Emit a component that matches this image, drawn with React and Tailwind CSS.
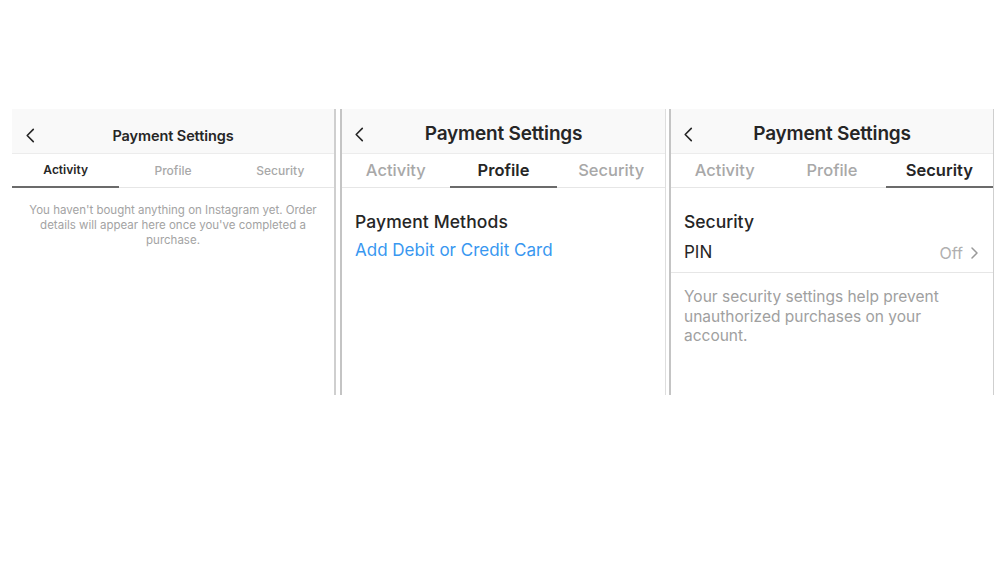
const font = { fontFamily: 'Inter, "Noto Sans", sans-serif' };

const Chevron = ({ className }) => (
  <svg className={className} viewBox="0 0 10 16" fill="none">
    <polyline points="8.5,1.5 2,8 8.5,14.5" stroke="#262626" strokeWidth="1.7" strokeLinecap="round" strokeLinejoin="round" />
  </svg>
);

const Header = ({ small }) => (
  <div className="relative h-[45px] bg-[#f9f9f9] border-b border-[#ececec] flex items-center justify-center">
    <Chevron
      className={
        small
          ? 'absolute left-[13px] top-[19px] w-[10px] h-[15px]'
          : 'absolute left-[12px] top-[18px] w-[10px] h-[15px]'
      }
    />
    <span
      className={
        small
          ? 'text-[14.5px] font-semibold text-[#262626] tracking-[-0.1px] translate-y-[5px]'
          : 'text-[19px] font-semibold text-[#262626] tracking-[-0.2px] translate-y-[3px]'
      }
    >
      Payment Settings
    </span>
  </div>
);

const Tabs = ({ active, small }) => (
  <div className="flex h-[34px] border-b border-[#e6e6e6]">
    {['Activity', 'Profile', 'Security'].map((t) => (
      <div
        key={t}
        className={
          'flex-1 flex items-center justify-center ' +
          (t === active ? 'border-b-2 border-[#6b6b6b] -mb-px ' : '') +
          (small ? 'text-[12px] ' : 'text-[16.5px] ') +
          (t === active ? 'text-[#262626] font-semibold' : 'text-[#a8a8a8] font-medium')
        }
      >
        {t}
      </div>
    ))}
  </div>
);

export default function App() {
  return (
    <div className="w-[999px] h-[562px] bg-white pt-[109px] pl-[12px]" style={font}>
      <div className="flex h-[286px]">
        <div className="w-[324px] border-r-2 border-[#cfcfcf]">
          <Header small />
          <Tabs active="Activity" small />
          <p className="px-[14px] pt-[15px] text-center text-[11.5px] leading-[15px] text-[#a3a3a3]">
            You haven't bought anything on Instagram yet. Order details will appear here once you've completed a purchase.
          </p>
        </div>
        <div className="w-[4px]" />
        <div className="w-[326px] border-l-2 border-r border-l-[#c4c4c4] border-r-[#dedede]">
          <Header />
          <Tabs active="Profile" />
          <div className="px-[13px] pt-[22px]">
            <div className="text-[17.5px] font-medium text-[#262626] leading-[24px] tracking-[0.1px]">Payment Methods</div>
            <div className="text-[17px] text-[#3897f0] leading-[24px] mt-[4px]">Add Debit or Credit Card</div>
          </div>
        </div>
        <div className="w-[3px]" />
        <div className="w-[325px] border-l-2 border-r border-l-[#c4c4c4] border-r-[#cfcfcf]">
          <Header />
          <Tabs active="Security" />
          <div className="px-[13px] pt-[22px] text-[17.5px] font-medium text-[#262626] leading-[24px]">Security</div>
          <div className="flex items-center justify-between pl-[13px] pr-[15px] h-[40px] border-b border-[#e6e6e6] -mt-[1px]">
            <span className="text-[17px] text-[#262626]">PIN</span>
            <span className="flex items-center gap-[8px] text-[16px] text-[#b0b0b0]">
              Off
              <svg width="7" height="12" viewBox="0 0 7 12" fill="none">
                <polyline points="1,1 6,6 1,11" stroke="#9a9a9a" strokeWidth="1.5" strokeLinecap="round" strokeLinejoin="round" />
              </svg>
            </span>
          </div>
          <p className="px-[13px] pt-[14px] text-[15.5px] leading-[19.5px] text-[#a0a0a0]">
            Your security settings help prevent unauthorized purchases on your account.
          </p>
        </div>
      </div>
    </div>
  );
}
